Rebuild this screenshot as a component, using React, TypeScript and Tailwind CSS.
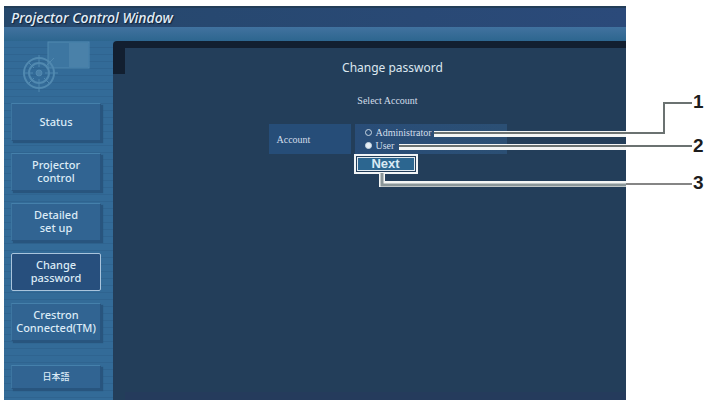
import { useState } from 'react';

interface NavItem {
  id: string;
  lines: string[];
}

const navItems: NavItem[] = [
  { id: 'status', lines: ['Status'] },
  { id: 'projector', lines: ['Projector', 'control'] },
  { id: 'setup', lines: ['Detailed', 'set up'] },
  { id: 'password', lines: ['Change', 'password'] },
  { id: 'crestron', lines: ['Crestron', 'Connected(TM)'] },
];

const accounts = [
  { id: 'administrator', label: 'Administrator' },
  { id: 'user', label: 'User' },
];

const navBase =
  "flex w-full flex-col items-center justify-center border pb-0.5 font-['Noto_Sans','Noto_Sans_CJK_JP',sans-serif] leading-[13px] font-medium text-[#dcebf6]";
const navIdle =
  'border-t-[#4580ab] border-l-[#3d76a1] border-r-[#28557f] border-b-[#28557f] bg-[#316492] shadow-[2px_2px_1px_#28557e]';
const navActive = 'rounded-xs border-[#a9c4dc] bg-[#274f7d]';

function Logo() {
  return (
    <svg className="block h-[52px] w-[70px]" viewBox="0 0 70 52" fill="none" stroke="#5189b0">
      <rect x="25" y="1" width="41" height="26" fill="#3d76a1" />
      <rect x="46" y="2" width="19" height="24" fill="#4a81a9" stroke="none" />
      <circle cx="16" cy="32" r="15" strokeWidth="2" />
      <circle cx="16" cy="32" r="10" strokeWidth="2" />
      <circle cx="16" cy="32" r="3" fill="#4a81a9" />
      <path d="M16 14v12M16 38v13M0 32h10M22 32h13M23 25l8-8M5 21l6 6M5 43l6-6M27 43l-6-6" />
    </svg>
  );
}

// Numbered leader lines pointing at the form controls
function Callouts() {
  return (
    <svg
      className="pointer-events-none absolute top-0 left-0 h-[401px] w-[707px]"
      viewBox="0 0 707 401"
      fill="none"
    >
      <path d="M434 134H626M399 147H626" stroke="#f4f6f5" strokeWidth="6" />
      <path d="M382 173V184H626" stroke="#f4f6f5" strokeWidth="6" />
      <path d="M434 133H664V103H692" stroke="#6b7271" strokeWidth="2" />
      <path d="M399 146H692" stroke="#6b7271" strokeWidth="2" />
      <path d="M382 173V185H626" stroke="#8a9699" strokeWidth="3" />
      <path d="M626 184H692" stroke="#858585" strokeWidth="2" />
      <g fill="#1c1c1c" fontFamily="Liberation Sans, Arial, sans-serif" fontSize="19" fontWeight="bold">
        <text x="693" y="108">1</text>
        <text x="693" y="152">2</text>
        <text x="693" y="189">3</text>
      </g>
    </svg>
  );
}

export default function App() {
  const [page, setPage] = useState('password');
  const [account, setAccount] = useState('user');

  return (
    <div className="relative min-h-screen bg-white pt-1.5 pr-[81px] pl-1">
      <div className="flex min-h-[394px] flex-col bg-[#316792]">
        <header className="h-[21px] border-t-2 border-[#223d58] bg-linear-to-r from-[#25476b] to-[#2b4a7a] pl-[7px]">
          <h1 className="font-['Noto_Sans',sans-serif] text-[14px] leading-5 font-medium text-[#e4eef7] italic [text-shadow:1px_1px_1px_#0d2038]">
            Projector Control Window
          </h1>
        </header>
        <div className="h-3.5 bg-linear-to-b from-[#41729f] to-[#2d668f]" />

        <div className="flex flex-1">
          {/* Sidebar */}
          <aside className="flex w-[109px] shrink-0 flex-col bg-[repeating-linear-gradient(to_bottom,#336b98_0px,#336b98_6px,#2f6490_6px,#2f6490_7px)] pr-3 pl-[7px]">
            <div className="h-[62px] pl-3">
              <Logo />
            </div>
            <nav className="flex flex-col gap-3">
              {navItems.map((item) => (
                <button
                  key={item.id}
                  type="button"
                  onClick={() => setPage(item.id)}
                  className={`h-[38px] text-[11px] ${navBase} ${page === item.id ? navActive : navIdle}`}
                >
                  {item.lines.map((line) => (
                    <span key={line} className="whitespace-nowrap">
                      {line}
                    </span>
                  ))}
                </button>
              ))}
              <button type="button" lang="ja" className={`mt-3 h-6 text-[9px] ${navBase} ${navIdle}`}>
                日本語
              </button>
            </nav>
          </aside>

          {/* Content */}
          <div className="flex flex-1 flex-col rounded-tl-sm bg-[#121f30] pt-[7px]">
            <div className="flex flex-1">
              <div className="w-3 shrink-0 bg-[#233e5a]">
                <div className="h-[26px] bg-[#121f30]" />
              </div>
              <main className="flex flex-1 flex-col items-center border-b-8 border-[#253b5c] bg-[#233e5a] pr-1 pl-7 font-['Liberation_Serif',serif] text-[10px] text-[#d3deea]">
                <h2 className="mt-2.5 pl-2.5 font-['Noto_Sans',sans-serif] text-xs leading-5 text-[#dce7f0]">
                  Change password
                </h2>
                <p className="mt-[15px] leading-4">Select Account</p>
                <table className="mt-[15px] w-[238px] border-separate border-spacing-0">
                  <tbody>
                    <tr>
                      <th scope="row" className="w-[82px] bg-[#264d78] pl-2 text-left font-normal">
                        Account
                      </th>
                      <td className="w-1" />
                      <td className="bg-linear-to-r from-[#294d78] to-[#2b4f74] py-0.5 pl-2.5">
                        {accounts.map((a) => (
                          <label key={a.id} className="flex h-[13px] items-center gap-1 leading-3">
                            <input
                              type="radio"
                              name="account"
                              value={a.id}
                              checked={account === a.id}
                              onChange={() => setAccount(a.id)}
                              className="size-[7px] appearance-none rounded-full border border-[#c8d6e2] checked:bg-[#e6eef5]"
                            />
                            {a.label}
                          </label>
                        ))}
                      </td>
                    </tr>
                  </tbody>
                </table>
                <button
                  type="button"
                  className="mr-1 h-5 w-16 border-2 border-[#f1f4f6] bg-[#233e5a] p-px"
                >
                  <span className="flex h-full items-center justify-center border border-[#e2eaf0] bg-[#2c6690] font-['Liberation_Sans',sans-serif] text-[13px] leading-3 font-bold text-[#d9e9f4]">
                    Next
                  </span>
                </button>
              </main>
            </div>
          </div>
        </div>
      </div>
      <Callouts />
    </div>
  );
}
